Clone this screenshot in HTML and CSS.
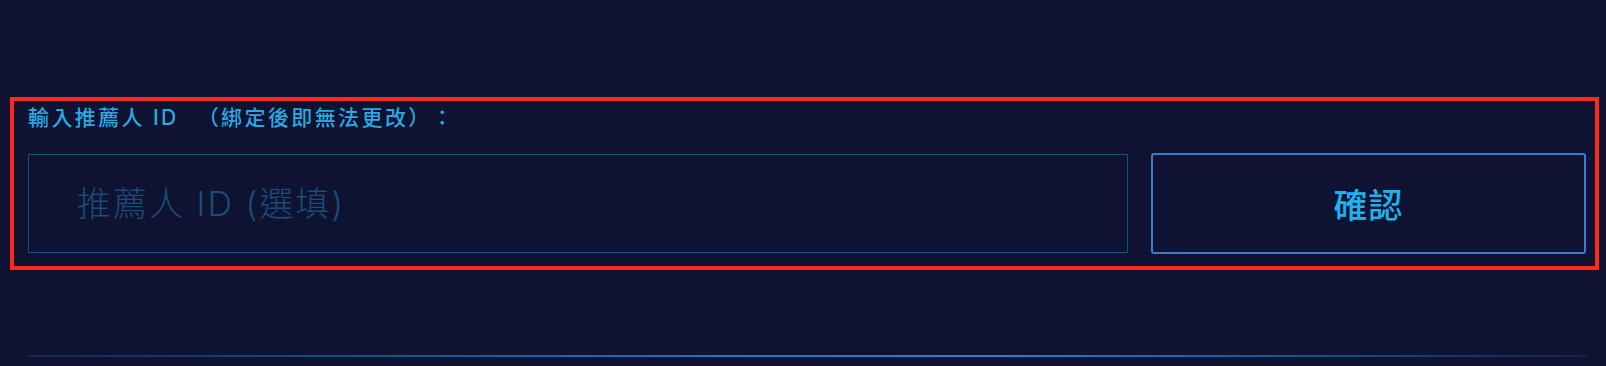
FILE: index.html
```html
<!DOCTYPE html>
<html lang="zh-Hant">
<head>
<meta charset="utf-8">
<title>推薦人</title>
<link rel="stylesheet" href="styles.css">
</head>
<body>
<div class="page">
  <section class="panel">
    <label class="label" for="ref">輸入推薦人 ID <span class="note">（綁定後即無法更改）：</span></label>
    <div class="row">
      <input id="ref" class="field" type="text" placeholder="推薦人 ID (選填)">
      <button class="confirm" type="button">確認</button>
    </div>
  </section>
  <div class="divider"></div>
</div>
</body>
</html>
```

FILE: styles.css
```css
html, body {
  margin: 0;
  padding: 0;
  background: #0d1330;
  height: 100%;
  overflow: hidden;
}

.page {
  padding-top: 97px;
  font-family: "Inter", "Noto Sans CJK TC", sans-serif;
}

.panel {
  margin: 0 7px 0 10px;
  border: 4px solid #ff2a1c;
  padding: 3px 9px 12px 14px;
  display: flex;
  flex-direction: column;
}

.label {
  font-family: "Inter", "Noto Sans CJK TC", sans-serif;
  font-size: 21px;
  line-height: 28px;
  letter-spacing: 2.4px;
  color: #2aa9e2;
  font-weight: 500;
  text-spacing-trim: space-all;
}

.note {
  margin-left: 11px;
}

.row {
  margin-top: 21px;
  display: grid;
  grid-template-columns: 1100px 1fr;
  column-gap: 23px;
  align-items: center;
}

.field {
  box-sizing: border-box;
  height: 99px;
  margin: 0;
  border: 1px solid #105380;
  background: transparent;
  outline: none;
  padding: 0 0 0 48px;
  font-family: "Inter", "Noto Sans CJK TC", sans-serif;
  font-size: 34px;
  font-weight: 300;
  letter-spacing: 2px;
  color: #2aa9e2;
}

.field::placeholder {
  color: #1b4c7a;
  opacity: 1;
}

.confirm {
  box-sizing: border-box;
  height: 101px;
  margin: 0;
  border: 2px solid #3a7ad9;
  border-radius: 3px;
  background: transparent;
  font-family: "Noto Sans CJK TC", sans-serif;
  font-size: 34px;
  font-weight: 500;
  letter-spacing: 1px;
  color: #1db3ee;
  cursor: pointer;
}

.divider {
  margin: 85px 19px 0 29px;
  height: 2px;
  background: linear-gradient(90deg, rgba(30, 110, 190, 0.25) 0%, rgba(38, 128, 210, 0.9) 45%, rgba(38, 128, 210, 1) 62%, rgba(30, 110, 190, 0.2) 100%);
}
```
